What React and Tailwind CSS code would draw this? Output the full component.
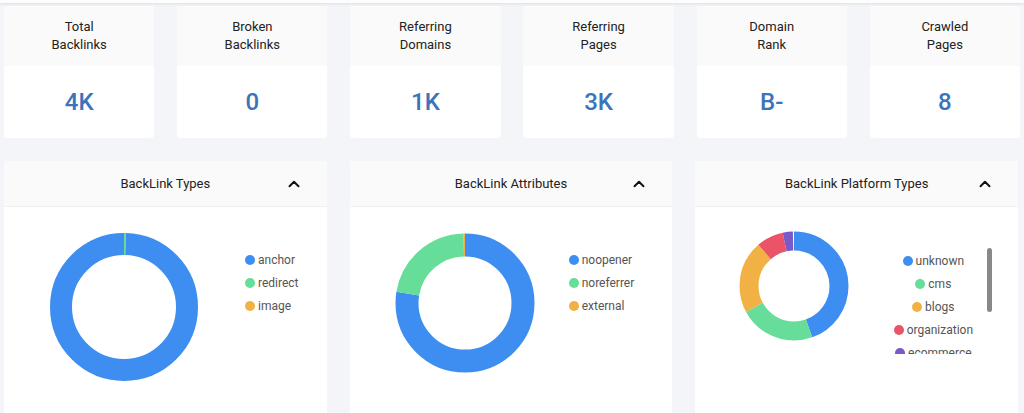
import { ChevronUp } from 'lucide-react';

const STATS = [
  ['Total', 'Backlinks', '4K'],
  ['Broken', 'Backlinks', '0'],
  ['Referring', 'Domains', '1K'],
  ['Referring', 'Pages', '3K'],
  ['Domain', 'Rank', 'B-'],
  ['Crawled', 'Pages', '8'],
];

const C = { blue: '#3d8ef0', green: '#66dd98', orange: '#f2b145', red: '#eb5468', purple: '#7a5ac8' };

function Donut({ size, r, w, parts }) {
  const circ = 2 * Math.PI * r;
  let off = 0;
  return (
    <svg width={size} height={size} viewBox={`0 0 ${size} ${size}`} className="-rotate-90">
      {parts.map(([color, pct], i) => {
        const len = (pct / 100) * circ;
        const el = (
          <circle key={i} cx={size / 2} cy={size / 2} r={r} fill="none" stroke={color} strokeWidth={w}
            strokeDasharray={`${len} ${circ - len}`} strokeDashoffset={-off} />
        );
        off += len;
        return el;
      })}
    </svg>
  );
}

function Legend({ items, center }) {
  return (
    <div className={`flex flex-col gap-[7px] text-[12px] text-[#555] ${center ? 'items-center' : ''}`}>
      {items.map(([c, l]) => (
        <div key={l} className="flex items-center gap-[3px] leading-4">
          <span className="w-[10px] h-[10px] rounded-full" style={{ background: c }} />
          <span>{l}</span>
        </div>
      ))}
    </div>
  );
}

function ChartCard({ title, children }) {
  return (
    <div className="bg-white rounded-[3px] flex flex-col h-[260px]">
      <div className="h-[46px] bg-[#fafafa] border-b border-[#f0f0f0] flex items-center relative">
        <span className="flex-1 text-center text-[13px] text-[#222]">{title}</span>
        <ChevronUp className="absolute right-[24px] top-[14px]" size={18} strokeWidth={2.6} color="#111" />
      </div>
      {children}
    </div>
  );
}

export default function App() {
  return (
    <div className="w-[1024px] h-[413px] overflow-hidden bg-[#f4f5f8] relative" style={{ fontFamily: 'Roboto, "Liberation Sans", sans-serif' }}>
      <div className="h-[3px] bg-[#fdfdfd] shadow-[0_1px_3px_rgba(0,0,0,0.1)]" />
      <div className="grid grid-cols-6 gap-x-[22.8px] px-[4px] pt-[3px]">
        {STATS.map(([a, b, v]) => (
          <div key={a + b} className="bg-white rounded-[3px] h-[132px] flex flex-col">
            <div className="h-[60px] bg-[#fafafa] flex flex-col items-center justify-center text-[13px] leading-[18px] text-[#222]">
              <span>{a}</span><span>{b}</span>
            </div>
            <div className="flex-1 flex items-center justify-center text-[24px] font-medium text-[#3b74b9]">{v}</div>
          </div>
        ))}
      </div>
      <div className="grid grid-cols-3 gap-x-[23px] px-[4px] mt-[23px] w-[1022px]">
        <ChartCard title="BackLink Types">
          <div className="flex items-start">
            <div className="ml-[44px] mt-[24px]"><Donut size={152} r={63} w={22} parts={[[C.green, 0.4], [C.blue, 99.6]]} /></div>
            <div className="ml-[45px] mt-[45px]"><Legend items={[[C.blue, 'anchor'], [C.green, 'redirect'], [C.orange, 'image']]} /></div>
          </div>
        </ChartCard>
        <ChartCard title="BackLink Attributes">
          <div className="flex items-start">
            <div className="ml-[44px] mt-[25px]"><Donut size={142} r={58} w={23} parts={[[C.blue, 77.5], [C.green, 22], [C.orange, 0.5]]} /></div>
            <div className="ml-[33px] mt-[45px]"><Legend items={[[C.blue, 'noopener'], [C.green, 'noreferrer'], [C.orange, 'external']]} /></div>
          </div>
        </ChartCard>
        <ChartCard title="BackLink Platform Types">
          <div className="flex items-start">
            <div className="ml-[44px] mt-[24px]"><Donut size={110} r={45} w={19} parts={[[C.blue, 44.5], [C.green, 22.5], [C.orange, 21.5], [C.red, 8], [C.purple, 3]]} /></div>
            <div className="ml-[44px] mt-[46px] h-[101px] overflow-hidden w-[80px]">
              <Legend center items={[[C.blue, 'unknown'], [C.green, 'cms'], [C.orange, 'blogs'], [C.red, 'organization'], [C.purple, 'ecommerce']]} />
            </div>
            <div className="ml-[14px] mt-[41px] w-[5px] h-[64px] rounded bg-[#888]" />
          </div>
        </ChartCard>
      </div>
    </div>
  );
}
